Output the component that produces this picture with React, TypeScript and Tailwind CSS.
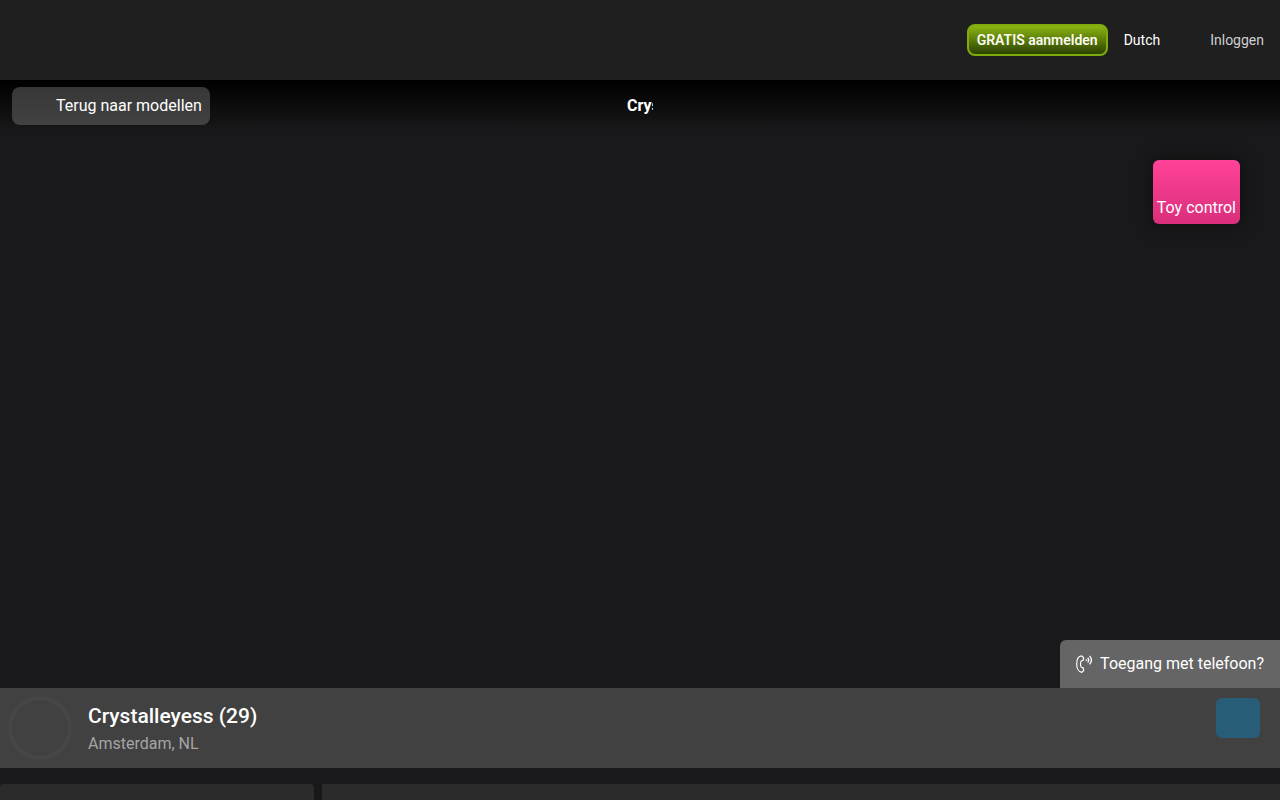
import React from 'react'

const model = {
  name: 'Crystalleyess',
  age: 29,
  location: 'Amsterdam, NL',
}

function PhoneWaves() {
  return (
    <svg
      width="16"
      height="18"
      viewBox="0 0 16 18"
      fill="none"
      stroke="currentColor"
      strokeLinecap="round"
      strokeLinejoin="round"
      aria-hidden="true"
      className="shrink-0"
    >
      {/* handset */}
      <path d="M5.6 0.9 C2.2 1.2 0.7 5 0.7 9 C0.7 13 2.4 17 5.8 17.3 L7.7 15.6 L7.2 12.9 L5.3 12.2 C4.2 11 4.2 7 5.3 5.9 L7.2 5.3 L7.6 2.5 Z" strokeWidth="1.2" />
      {/* waves */}
      <circle cx="10.3" cy="5" r="0.6" fill="currentColor" strokeWidth="0.5" />
      <path d="M12 3.2 C12.9 4.3 12.9 5.9 12 7 M13.9 1.3 C15.7 3.5 15.7 6.7 13.9 8.9" strokeWidth="1.3" />
    </svg>
  )
}

function Header() {
  return (
    <header className="flex h-20 shrink-0 items-center justify-end bg-[#1f1f1f] px-4 text-sm">
      <button className="h-8 rounded-lg border-2 border-[#80ab0c] bg-linear-to-b/srgb from-[#8ab512] to-[#2c4200] px-2 font-semibold text-[#fafaf0]">
        GRATIS aanmelden
      </button>
      <button className="ml-4 text-white">Dutch</button>
      <a href="#login" className="ml-[50px] text-[#cfcfcf]">Inloggen</a>
    </header>
  )
}

function Stage() {
  return (
    <main className="flex flex-1 flex-col bg-[#19191b]">
      <div className="grid h-[52px] grid-cols-[1fr_auto_1fr] items-center bg-linear-to-b/srgb from-black to-[#19191b] px-3">
        <button className="h-[38px] justify-self-start rounded-lg bg-linear-to-b/srgb from-[#373737] to-[#424243] pr-2 pl-11 text-white">
          Terug naar modellen
        </button>
        <h1 className="w-[26px] overflow-hidden font-bold whitespace-nowrap text-white">{model.name}</h1>
      </div>

      <button className="mt-7 mr-10 flex h-16 items-end self-end rounded-md bg-linear-to-b/srgb from-[#ff4298] to-[#d92f7c] px-1 pb-1 text-white shadow-[0_0_16px_#0008]">
        Toy control
      </button>

      <button className="mt-auto flex h-12 items-center gap-2 self-end rounded-tl-md bg-[#656565] px-4 text-white">
        <PhoneWaves />
        Toegang met telefoon?
      </button>
    </main>
  )
}

function ProfileBar() {
  return (
    <section className="flex h-20 shrink-0 items-start bg-[#414141] pr-5 pl-2">
      <div className="mt-2 size-16 rounded-full border-4 border-[#464646]" />
      <div className="ml-4 pt-[14px]">
        <h2 className="text-[21px] leading-7 font-medium text-white">
          {model.name} ({model.age})
        </h2>
        <p className="mt-[2px] text-[#a5a5a5]">{model.location}</p>
      </div>
      <button aria-label="Volgen" className="mt-[10px] ml-auto h-10 w-11 rounded-md bg-[#285d78]" />
    </section>
  )
}

export default function App() {
  return (
    <div className="flex h-screen flex-col overflow-hidden bg-[#19191b] font-[Roboto,sans-serif] text-base">
      <Header />
      <Stage />
      <ProfileBar />
      <div className="mt-4 flex h-4 shrink-0 gap-2">
        <div className="w-[314px] rounded-t bg-[#2b2b2b]" />
        <div className="flex-1 bg-[#2b2b2b]" />
      </div>
    </div>
  )
}
